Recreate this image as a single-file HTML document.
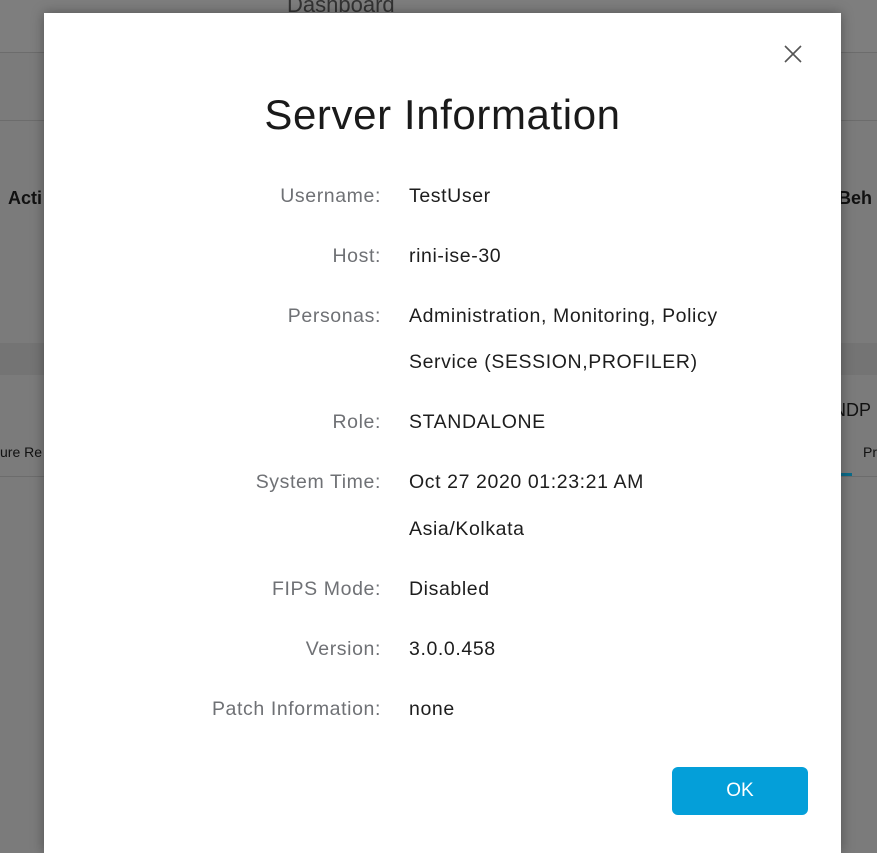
<!DOCTYPE html>
<html><head><meta charset="utf-8"><style>
*{margin:0;padding:0;box-sizing:border-box}
body{width:877px;height:848px;overflow:hidden;background:#7b7b7b;font-family:"Liberation Sans",sans-serif;position:relative}
.bg{position:absolute;left:0;width:877px}
.m{position:absolute;left:44px;top:13px;width:797px;height:840px;background:#fff;box-shadow:0 0 12px rgba(0,0,0,.35)}
.t{position:absolute;left:0;width:797px;top:78px;text-align:center;font-size:42px;color:#1a1a1a;font-weight:normal;letter-spacing:0.6px}
.l{position:absolute;right:460px;font-size:19.5px;letter-spacing:0.6px;color:#6f7175;white-space:nowrap;line-height:22px}
.v{position:absolute;left:365px;font-size:19.5px;letter-spacing:0.6px;color:#1d1d1d;white-space:nowrap;line-height:22px}
.ok{position:absolute;left:628px;top:754px;width:136px;height:48px;background:#049fd9;border-radius:6px;color:#fff;font-size:19px;text-align:center;line-height:48px}
</style></head><body>
<div class="bg" style="top:0;height:53px;background:#7e7e7e;border-bottom:1px solid #6c6c6c"></div>
<div class="bg" style="top:120px;height:1px;background:#6c6c6c"></div>
<div class="bg" style="top:343px;height:32px;background:#747474"></div>
<div class="bg" style="top:476px;height:1px;background:#6c6c6c"></div>
<div style="position:absolute;left:287px;top:-8px;font-size:22px;color:#333">Dashboard</div>
<div style="position:absolute;left:8px;top:188px;font-size:18px;font-weight:bold;color:#111">Acti</div>
<div style="position:absolute;left:838px;top:188px;font-size:18px;font-weight:bold;color:#111">Beh</div>
<div style="position:absolute;left:0;top:444px;font-size:14px;color:#111">ure Re</div>
<div style="position:absolute;left:833px;top:400px;font-size:18px;color:#111">NDP</div>
<div style="position:absolute;left:863px;top:444px;font-size:14px;color:#111">Pr</div>
<div style="position:absolute;left:836px;top:473px;width:16px;height:3px;background:#0b6c8a"></div>
<div class="m">
<svg style="position:absolute;left:739px;top:31px" width="20" height="20" viewBox="0 0 20 20"><path d="M2 2L18 18M18 2L2 18" stroke="#555" stroke-width="1.6" fill="none"/></svg>
<div class="t">Server Information</div>
<div class="l" style="top:172px">Username:</div><div class="v" style="top:172px">TestUser</div>
<div class="l" style="top:232px">Host:</div><div class="v" style="top:232px">rini-ise-30</div>
<div class="l" style="top:292px">Personas:</div><div class="v" style="top:292px">Administration, Monitoring, Policy</div>
<div class="v" style="top:338px">Service (SESSION,PROFILER)</div>
<div class="l" style="top:398px">Role:</div><div class="v" style="top:398px">STANDALONE</div>
<div class="l" style="top:458px">System Time:</div><div class="v" style="top:458px">Oct 27 2020 01:23:21 AM</div>
<div class="v" style="top:505px">Asia/Kolkata</div>
<div class="l" style="top:565px">FIPS Mode:</div><div class="v" style="top:565px">Disabled</div>
<div class="l" style="top:625px">Version:</div><div class="v" style="top:625px">3.0.0.458</div>
<div class="l" style="top:685px">Patch Information:</div><div class="v" style="top:685px">none</div>
<div class="ok">OK</div>
</div>
</body></html>
